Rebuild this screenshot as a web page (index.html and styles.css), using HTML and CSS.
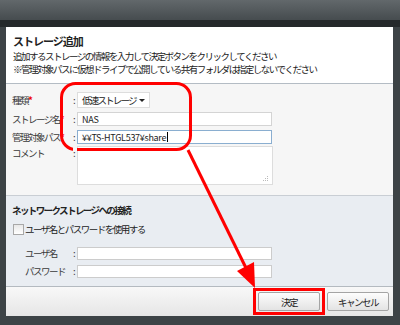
FILE: index.html
```html
<!DOCTYPE html>
<html lang="ja">
<head>
<meta charset="utf-8">
<link rel="stylesheet" href="styles.css">
</head>
<body>
<div class="win">
  <div class="titlebar"></div>
  <div class="band"></div>
  <div class="frame">
    <div class="dialog">
      <div class="head">
        <div class="title">ストレージ追加</div>
        <div class="desc">追加するストレージの情報を入力して決定ボタンをクリックしてください</div>
        <div class="desc">※管理対象パスに仮想ドライブで公開している共有フォルダは指定しないでください</div>
      </div>
      <div class="form">
        <div class="row r-select">
          <span class="lbl">種類<i>*</i></span><span class="colon">:</span>
          <span class="select">低速ストレージ<span class="caret"></span></span>
        </div>
        <div class="row">
          <span class="lbl">ストレージ名<i>*</i></span><span class="colon">:</span>
          <span class="input">NAS</span>
        </div>
        <div class="row">
          <span class="lbl">管理対象パス<i>*</i></span><span class="colon">:</span>
          <span class="input active">¥¥TS-HTGL537¥share<span class="cursor"></span></span>
        </div>
        <div class="row r-area">
          <span class="lbl">コメント</span><span class="colon">:</span>
          <span class="area"><span class="grip">
            <svg width="6" height="6" viewBox="0 0 6 6"><rect x="4" y="0" width="1" height="1" fill="#bbb"/><rect x="2" y="2" width="1" height="1" fill="#bbb"/><rect x="4" y="2" width="1" height="1" fill="#bbb"/><rect x="0" y="4" width="1" height="1" fill="#bbb"/><rect x="2" y="4" width="1" height="1" fill="#bbb"/><rect x="4" y="4" width="1" height="1" fill="#bbb"/></svg>
          </span></span>
        </div>
      </div>
      <div class="net">
        <div class="subtitle">ネットワークストレージへの接続</div>
        <div class="check"><span class="box"></span><span>ユーザ名とパスワードを使用する</span></div>
        <div class="row r-sm">
          <span class="lbl ind">ユーザ名</span><span class="colon">:</span>
          <span class="input sm"></span>
        </div>
        <div class="row r-sm">
          <span class="lbl ind">パスワード</span><span class="colon">:</span>
          <span class="input sm"></span>
        </div>
      </div>
      <div class="foot">
        <span class="btn">決定</span>
        <span class="btn">キャンセル</span>
      </div>
    </div>
  </div>
  <svg class="marks" width="400" height="325" viewBox="0 0 400 325">
    <rect x="61.5" y="83.5" width="129" height="66" rx="14" ry="14" fill="none" stroke="#f00" stroke-width="3"/>
    <line x1="188" y1="150" x2="246" y2="268" stroke="#f00" stroke-width="3"/>
    <polygon points="255,288 254,262 237,271" fill="#f00"/>
    <rect x="254.5" y="289.5" width="69" height="24" fill="none" stroke="#f00" stroke-width="3"/>
  </svg>
</div>
</body>
</html>
```

FILE: styles.css
```css
* { box-sizing: border-box; }
body { margin: 0; background: #3d4346; }
.win {
  position: relative;
  width: 400px; height: 325px;
  background: #3d4346;
  display: flex; flex-direction: column;
  font-family: "Noto Sans CJK JP", "Noto Sans", sans-serif;
  font-size: 9.5px;
  letter-spacing: -1.5px;
  color: #222;
  overflow: hidden;
}
.titlebar { height: 20px; background: linear-gradient(#62686b, #464c4f); }
.band { height: 7px; background: #25292b; }
.frame { flex: 1; padding: 0 7px 9px 6px; }
.dialog { height: 100%; background: #fff; display: flex; flex-direction: column; }
.head { height: 57px; padding: 7px 0 0 7px; border-bottom: 1px solid #b4bcc4; background: #fff; }
.title { font-size: 11px; font-weight: bold; letter-spacing: -1px; line-height: 15px; margin-bottom: 1px; }
.desc { line-height: 13px; }
.form { height: 112px; background: #f6f6f6; padding: 7px 0 0 6px; border-bottom: 1px solid #c9ced4; }
.row { display: flex; align-items: center; height: 18px; }
.r-select { height: 17px; margin-bottom: 2px; }
.lbl { width: 61px; white-space: nowrap; color: #3a3a3a; }
.lbl i { color: #e00; font-style: normal; font-weight: bold; }
.colon { width: 4px; color: #333; position: relative; z-index: 1; background: #f6f6f6; }
.net .colon { background: #e9edf2; }
.select {
  width: 73px; height: 16px; background: #fff; border: 1px solid #ddd;
  display: flex; align-items: center; padding-left: 4px; position: relative; letter-spacing: -1.8px;
}
.caret { position: absolute; right: 4px; top: 6px; border-left: 3px solid transparent; border-right: 3px solid transparent; border-top: 3px solid #222; }
.input {
  width: 195px; height: 14px; background: #fff; border: 1px solid #d4d4d4;
  display: flex; align-items: center; padding-left: 4px; font-size: 9px; letter-spacing: -0.3px;
}
.input.active { border-color: #8aaed0; }
.cursor { width: 1px; height: 10px; background: #000; margin-left: 1px; }
.r-area { align-items: flex-start; height: 39px; }
.area {
  width: 196px; height: 39px; background: #fff; border: 1px solid #ddd; position: relative;
}
.grip { position: absolute; right: 3px; bottom: 2px; display: flex; }
.net { height: 91px; background: #e9edf2; padding: 7px 0 0 6px; border-bottom: 1px solid #b4bac0; }
.subtitle { font-weight: bold; letter-spacing: -1.6px; line-height: 14px; margin-bottom: 5px; }
.check { display: flex; align-items: center; height: 14px; margin-bottom: 8px; }
.box { width: 11px; height: 11px; border: 1px solid #a8a8a8; background: linear-gradient(#e8e8e8, #fff); margin: 0 1px 0 1px; }
.r-sm { height: 18px; }
.ind { padding-left: 13px; }
.input.sm { height: 13px; border-color: #ccc; }
.foot {
  flex: 1; background: linear-gradient(#f8f8f8, #e6e6e6);
  display: flex; justify-content: flex-end; align-items: center; gap: 7px; padding-right: 4px;
}
.btn {
  width: 62px; height: 19px; border: 1px solid #a4a4a4; border-radius: 2px;
  background: linear-gradient(#fdfdfd, #e3e3e3);
  display: flex; align-items: center; justify-content: center; color: #222;
}
.marks { position: absolute; left: 0; top: 0; pointer-events: none; }
```
